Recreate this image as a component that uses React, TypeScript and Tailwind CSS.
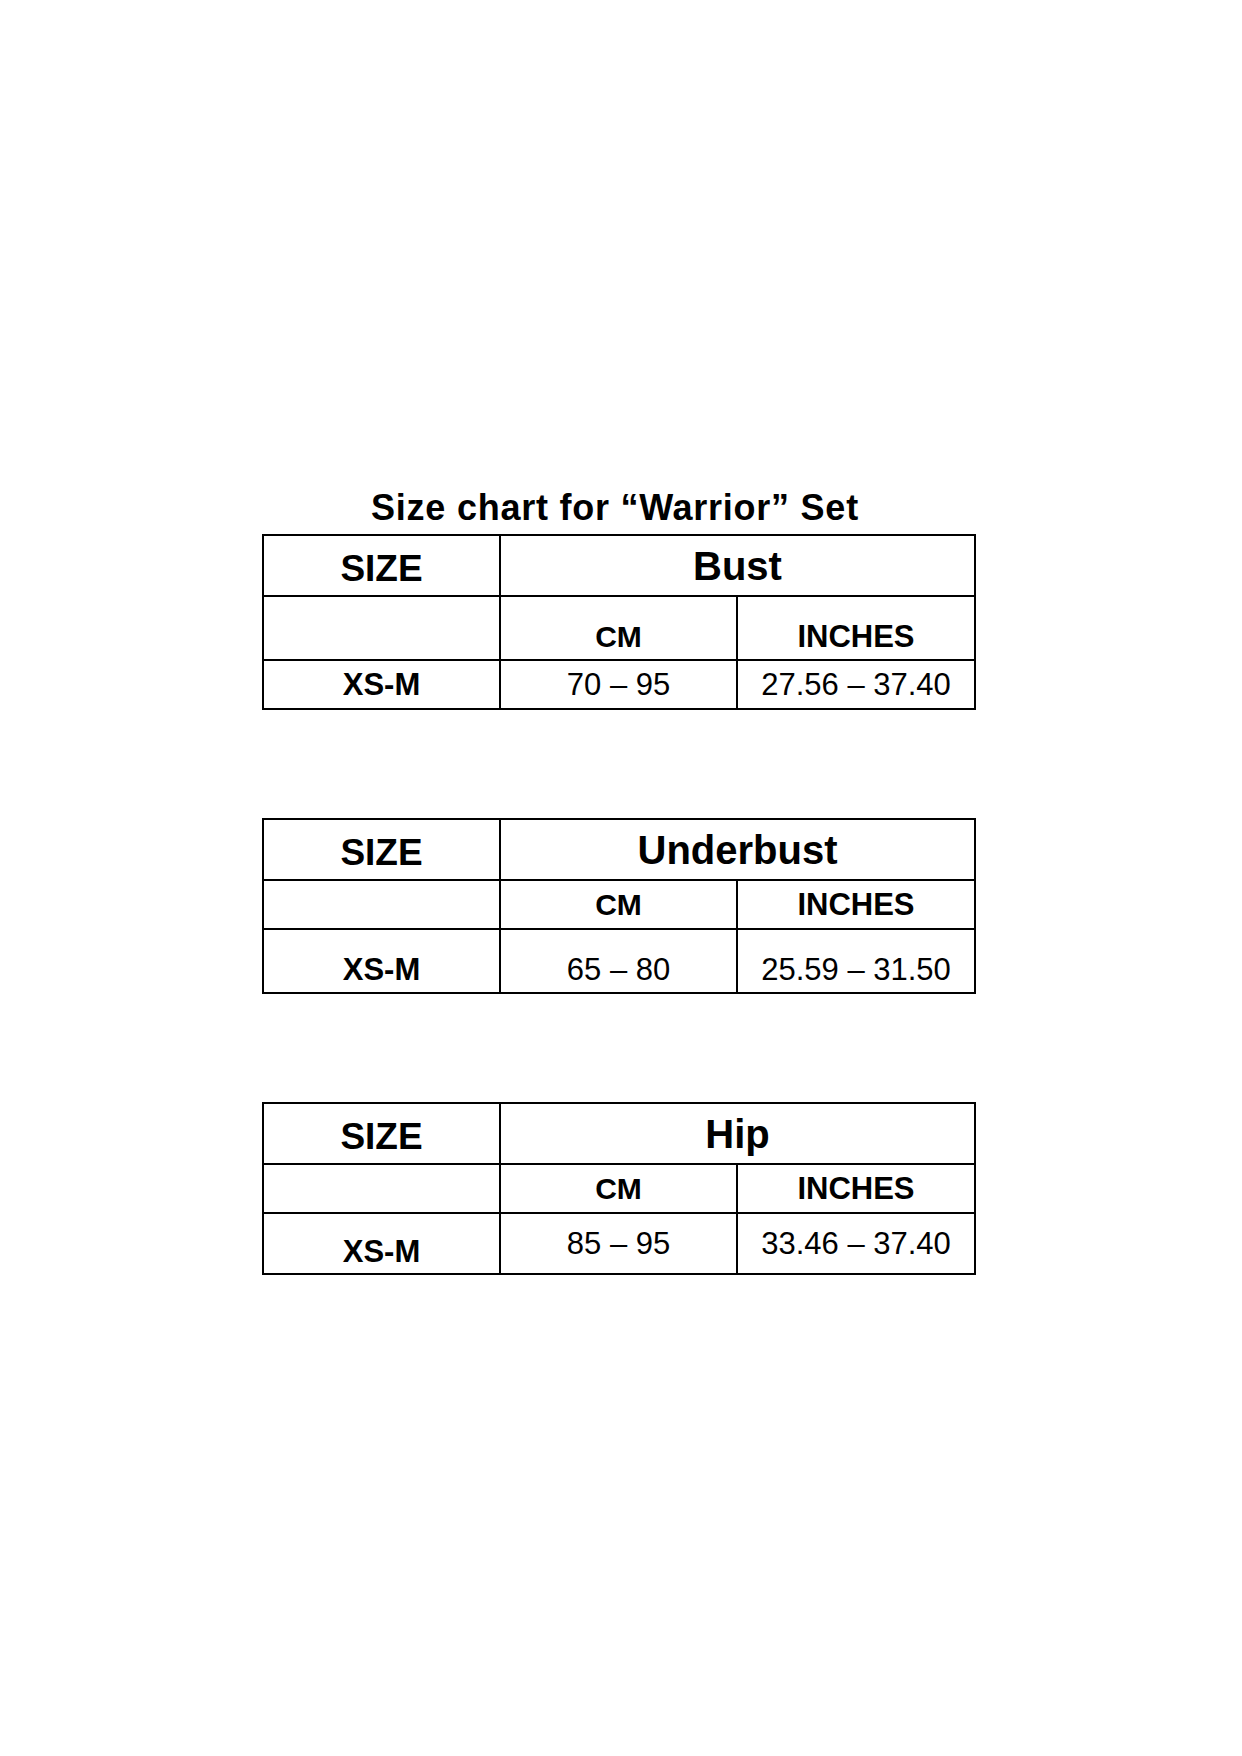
import React from "react"

type Align = "center" | "bottom" | "bottom-sm"

interface Chart {
  label: string
  rowHeights: [string, string, string]
  unitsAlign: Align
  sizeAlign: Align
  valueAlign: Align
  cm: string
  inches: string
}

const charts: Chart[] = [
  {
    label: "Bust",
    rowHeights: ["h-[59px]", "h-[64px]", "h-[49px]"],
    unitsAlign: "bottom",
    sizeAlign: "center",
    valueAlign: "center",
    cm: "70 – 95",
    inches: "27.56 – 37.40",
  },
  {
    label: "Underbust",
    rowHeights: ["h-[59px]", "h-[49px]", "h-[64px]"],
    unitsAlign: "center",
    sizeAlign: "bottom",
    valueAlign: "bottom",
    cm: "65 – 80",
    inches: "25.59 – 31.50",
  },
  {
    label: "Hip",
    rowHeights: ["h-[59px]", "h-[49px]", "h-[61px]"],
    unitsAlign: "center",
    sizeAlign: "bottom-sm",
    valueAlign: "center",
    cm: "85 – 95",
    inches: "33.46 – 37.40",
  },
]

// flex alignment for a cell's text
function alignCls(a: Align) {
  if (a === "bottom") return "items-end pb-[7px]"
  if (a === "bottom-sm") return "items-end pb-[6px]"
  return "items-center"
}

function SizeTable({ chart }: { chart: Chart }) {
  const [h1, h2, h3] = chart.rowHeights
  return (
    <div className="w-[714px] border-2 border-black">
      {/* header */}
      <div className={`flex ${h1}`}>
        <div className="w-[235px] flex items-center justify-center pt-[5px] text-[37px] font-bold leading-none">
          SIZE
        </div>
        <div className="w-[475px] border-l-2 border-black flex items-center justify-center text-[40px] font-bold leading-none">
          {chart.label}
        </div>
      </div>

      {/* units */}
      <div className={`flex ${h2} border-t-2 border-black`}>
        <div className="w-[235px]" />
        <div
          className={`w-[237px] border-l-2 border-black flex justify-center ${alignCls(chart.unitsAlign)} text-[30px] font-bold leading-none`}
        >
          CM
        </div>
        <div
          className={`w-[238px] border-l-2 border-black flex justify-center ${alignCls(chart.unitsAlign)} text-[31px] font-bold leading-none`}
        >
          INCHES
        </div>
      </div>

      {/* values */}
      <div className={`flex ${h3} border-t-2 border-black`}>
        <div
          className={`w-[235px] flex justify-center ${alignCls(chart.sizeAlign)} text-[31px] font-bold leading-none`}
        >
          XS-M
        </div>
        <div
          className={`w-[237px] border-l-2 border-black flex justify-center ${alignCls(chart.valueAlign)} text-[31px] leading-none`}
        >
          {chart.cm}
        </div>
        <div
          className={`w-[238px] border-l-2 border-black flex justify-center ${alignCls(chart.valueAlign)} text-[31px] leading-none`}
        >
          {chart.inches}
        </div>
      </div>
    </div>
  )
}

export default function App() {
  return (
    <div className="w-[1242px] h-[1756px] bg-white text-black font-['Liberation_Sans',Arial,sans-serif]">
      <div className="flex flex-col pl-[262px] pt-[490px]">
        <h1 className="w-[714px] pr-[8px] text-center text-[36px] font-bold leading-none tracking-[0.75px] mb-[8px]">
          Size chart for “Warrior” Set
        </h1>
        <div className="flex flex-col gap-[108px]">
          {charts.map((c) => (
            <SizeTable key={c.label} chart={c} />
          ))}
        </div>
      </div>
    </div>
  )
}
